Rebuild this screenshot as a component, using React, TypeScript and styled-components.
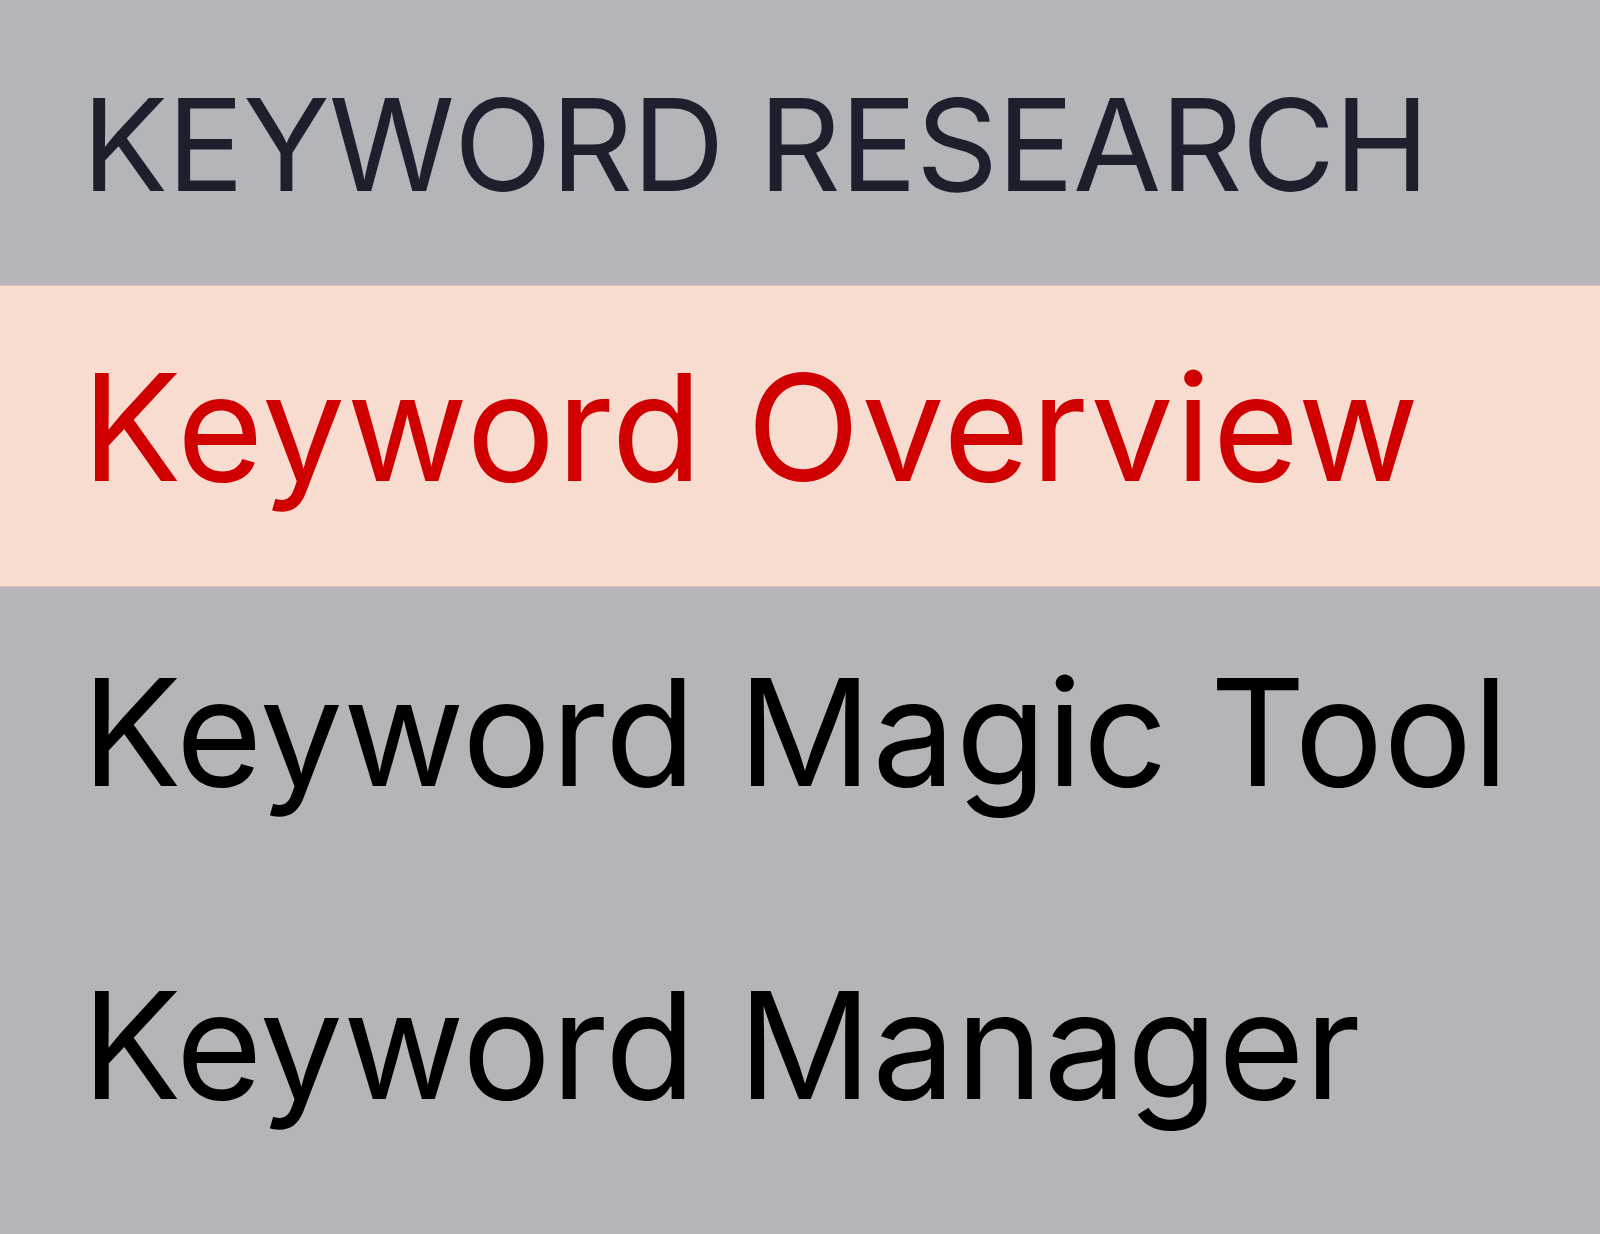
import styled, { createGlobalStyle } from "styled-components";

const GlobalStyle = createGlobalStyle`
  html, body {
    margin: 0;
    padding: 0;
    background: #b4b5b9;
  }
  body {
    font-family: Inter, "Noto Sans", sans-serif;
  }
`;

const Menu = styled.nav`
  width: 1600px;
  height: 1234px;
  background: #b4b5b9;
  display: flex;
  flex-direction: column;
  overflow: hidden;
`;

const SectionTitle = styled.div`
  height: 285px;
  flex-shrink: 0;
  box-sizing: border-box;
  padding: 81px 0 0 82px;
  font-size: 128px;
  line-height: 128px;
  font-weight: 400;
  letter-spacing: -1px;
  color: #1c1f2c;
  text-transform: uppercase;
  white-space: nowrap;
`;

const MenuItem = styled.a<{ $active?: boolean }>`
  display: block;
  flex-shrink: 0;
  height: ${(p) => (p.$active ? "302px" : "313px")};
  box-sizing: border-box;
  padding: ${(p) => (p.$active ? "68px" : "71px")} 0 0 82px;
  font-size: 148px;
  line-height: 148px;
  font-weight: 400;
  letter-spacing: ${(p) => (p.$active ? "1.5px" : "0.4px")};
  white-space: nowrap;
  text-decoration: none;
  color: ${(p) => (p.$active ? "#d10000" : "#000000")};
  background: ${(p) => (p.$active ? "#f9dcd0" : "transparent")};
  border-top: 1px solid ${(p) => (p.$active ? "#e9c2b6" : "transparent")};
  border-bottom: 1px solid ${(p) => (p.$active ? "#e9c2b6" : "transparent")};
`;

const items = [
  { label: "Keyword Overview", active: true },
  { label: "Keyword Magic Tool", active: false },
  { label: "Keyword Manager", active: false },
];

export default function App() {
  return (
    <>
      <GlobalStyle />
      <Menu>
        <SectionTitle>Keyword Research</SectionTitle>
        {items.map((item) => (
          <MenuItem key={item.label} href="#" $active={item.active}>
            {item.label}
          </MenuItem>
        ))}
      </Menu>
    </>
  );
}
